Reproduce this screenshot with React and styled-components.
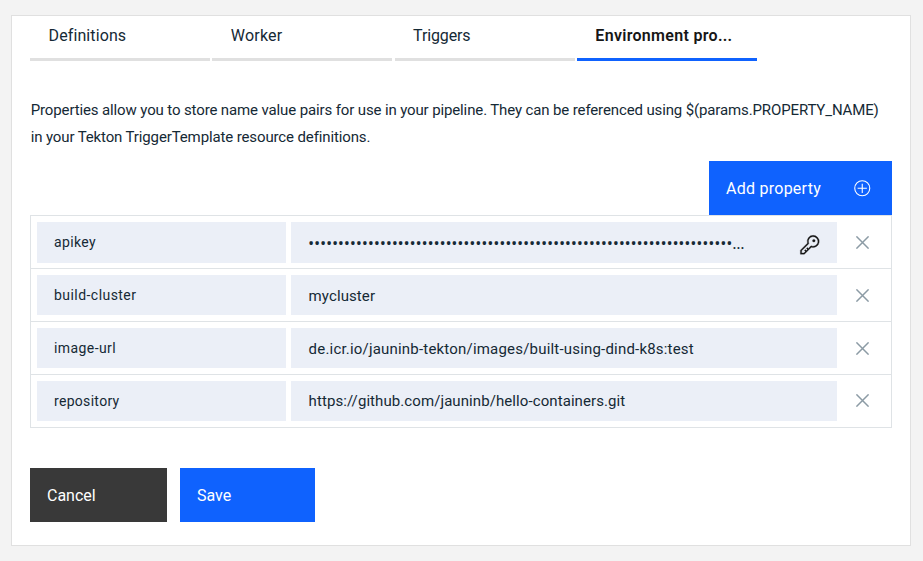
import React from 'react';
import styled, { createGlobalStyle } from 'styled-components';

const GlobalStyle = createGlobalStyle`
  * { box-sizing: border-box; }
  body {
    margin: 0;
    background: #f3f3f3;
    color: #152935;
    font-family: Roboto, 'Open Sans', sans-serif;
  }
`;

const Page = styled.main`
  height: 561px;
  padding: 15px 12px 15px 11px;
  overflow: hidden;
`;

const Panel = styled.section`
  display: flex;
  flex-direction: column;
  height: 531px;
  padding: 0 18px;
  border: 1px solid #e0e0e0;
  background: #fff;
`;

const TabList = styled.nav`
  display: flex;
  gap: 2.25px;
`;

const Tab = styled.div`
  width: 180px;
  height: 45px;
  padding: 10px 10px 0 18.6px;
  border-bottom: 3px solid ${(p) => (p.$active ? '#0f62fe' : '#e0e0e0')};
  color: ${(p) => (p.$active ? '#161616' : '#152935')};
  font-size: 16px;
  font-weight: ${(p) => (p.$active ? 600 : 400)};
  line-height: 20px;
  letter-spacing: ${(p) => p.$track}px;
  white-space: nowrap;
`;

const Intro = styled.p`
  display: flex;
  flex-direction: column;
  margin: 36px 0 10px;
  padding-left: 0.7px;
  font-size: 15px;
  line-height: 27px;
  letter-spacing: -0.127px;
  white-space: nowrap;
`;

const Button = styled.button`
  display: flex;
  align-items: center;
  justify-content: space-between;
  width: ${(p) => p.$width}px;
  height: 54px;
  padding: 0 20.5px 0 17px;
  border: 0;
  background: ${(p) => (p.$secondary ? '#393939' : '#0f62fe')};
  color: #fff;
  font: 400 16px Roboto, sans-serif;
  letter-spacing: ${(p) => p.$track || 0}px;
`;

const TableToolbar = styled.div`
  display: flex;
  justify-content: flex-end;
`;

const Table = styled.div`
  display: flex;
  flex-direction: column;
  width: 862px;
  border: 1px solid #dfe3e6;
  border-bottom: 0;
`;

const Row = styled.div`
  display: grid;
  grid-template-columns: 249px 546px 1fr;
  column-gap: 5px;
  height: 53px;
  padding: 6px 0 6px 6px;
  border-bottom: 1px solid #dfe3e6;
`;

const Cell = styled.div`
  display: flex;
  align-items: center;
  justify-content: space-between;
  height: ${(p) => (p.$tall ? 41 : 40)}px;
  padding: 0 16px 0 17px;
  background: #ebeff7;
  white-space: nowrap;
`;

const PropertyName = styled.span`
  padding-bottom: ${(p) => (p.$raised ? 2 : 0)}px;
  font-size: 14px;
  line-height: 20px;
  letter-spacing: ${(p) => p.$track}px;
`;

const PropertyValue = styled.span`
  padding: ${(p) => (p.$lowered ? 2 : 0)}px 0 0 0.6px;
  font-size: 15px;
  line-height: 20px;
  letter-spacing: ${(p) => p.$track}px;
`;

const Secret = styled.span`
  font-family: 'Open Sans', sans-serif;
  font-size: 16.5px;
  line-height: 24px;
  letter-spacing: -0.23px;
`;

const RemoveButton = styled.button`
  display: flex;
  align-items: center;
  width: 13px;
  height: ${(p) => (p.$raised ? 39 : 41)}px;
  margin-left: 14px;
  padding: 0;
  border: 0;
  background: none;
`;

const Actions = styled.div`
  display: flex;
  gap: 13px;
  margin-top: 40px;
`;

const PlusIcon = () => (
  <svg width="18.5" height="18.5" viewBox="0 0 32 32" fill="none" stroke="#fff" strokeWidth="1.9">
    <circle cx="16" cy="16" r="13" />
    <path d="M16 8v16M8 16h16" />
  </svg>
);

const KeyIcon = () => (
  <svg width="21.6" height="21.6" viewBox="0 0 32 32" fill="#161616" stroke="#161616" strokeWidth="0.4">
    <path d="M21,2a8.9977,8.9977,0,0,0-8.6119,11.6118L2,24v6H8L18.3881,19.6118A9,9,0,1,0,21,2Zm0,16a7.0125,7.0125,0,0,1-2.0322-.3022L17.821,17.35l-.8472.8472-3.1811,3.1812L12.4141,20,11,21.4141l1.3787,1.3786-1.5859,1.586L9.4141,23,8,24.4141l1.3787,1.3786L7.1716,28H4V24.8284l9.8023-9.8023.8472-.8474-.3473-1.1467A7,7,0,1,1,21,18Z" />
    <circle cx="22" cy="10" r="2" />
  </svg>
);

const KeySlot = styled.span`
  display: flex;
  margin-top: 4.4px;
`;

const CrossIcon = () => (
  <svg width="13" height="13" viewBox="0 0 13 13" fill="none" stroke="#8c9ba5" strokeWidth="1.5">
    <path d="M0.4 0.4l12.2 12.2M12.6 0.4L0.4 12.6" />
  </svg>
);

const tabs = [
  { label: 'Definitions', track: 0.098 },
  { label: 'Worker', track: 0.19 },
  { label: 'Triggers', track: -0.13 },
  { label: 'Environment pro...', track: 0.3, active: true },
];

const properties = [
  { name: 'apikey', nameTrack: 0.36, secret: true },
  { name: 'build-cluster', nameTrack: 0.45, value: 'mycluster', valueTrack: 0.1, lowered: true },
  {
    name: 'image-url',
    nameTrack: 0.41,
    value: 'de.icr.io/jauninb-tekton/images/built-using-dind-k8s:test',
    valueTrack: 0.195,
    lowered: true,
  },
  {
    name: 'repository',
    nameTrack: 0.31,
    value: 'https://github.com/jauninb/hello-containers.git',
    valueTrack: 0.085,
  },
];

export default function App() {
  return (
    <Page>
      <GlobalStyle />
      <Panel>
        <TabList>
          {tabs.map((tab) => (
            <Tab key={tab.label} $active={tab.active} $track={tab.track}>
              {tab.label}
            </Tab>
          ))}
        </TabList>
        <Intro>
          <span>
            Properties allow you to store name value pairs for use in your pipeline. They can be
            referenced using $(params.PROPERTY_NAME)
          </span>
          <span>in your Tekton TriggerTemplate resource definitions.</span>
        </Intro>
        <TableToolbar>
          <Button $width={183} $track={0.257}>
            Add property
            <PlusIcon />
          </Button>
        </TableToolbar>
        <Table>
          {properties.map((property, index) => (
            <Row key={property.name}>
              <Cell $tall={index === 0}>
                <PropertyName $track={property.nameTrack} $raised={index === 0}>
                  {property.name}
                </PropertyName>
              </Cell>
              <Cell $tall={index === 0}>
                {property.secret ? (
                  <>
                    <Secret>{'•'.repeat(71)}...</Secret>
                    <KeySlot>
                      <KeyIcon />
                    </KeySlot>
                  </>
                ) : (
                  <PropertyValue $track={property.valueTrack} $lowered={property.lowered}>
                    {property.value}
                  </PropertyValue>
                )}
              </Cell>
              <RemoveButton $raised={index === properties.length - 1} aria-label="Remove property">
                <CrossIcon />
              </RemoveButton>
            </Row>
          ))}
        </Table>
        <Actions>
          <Button $secondary $width={137}>
            Cancel
          </Button>
          <Button $width={135}>Save</Button>
        </Actions>
      </Panel>
    </Page>
  );
}
